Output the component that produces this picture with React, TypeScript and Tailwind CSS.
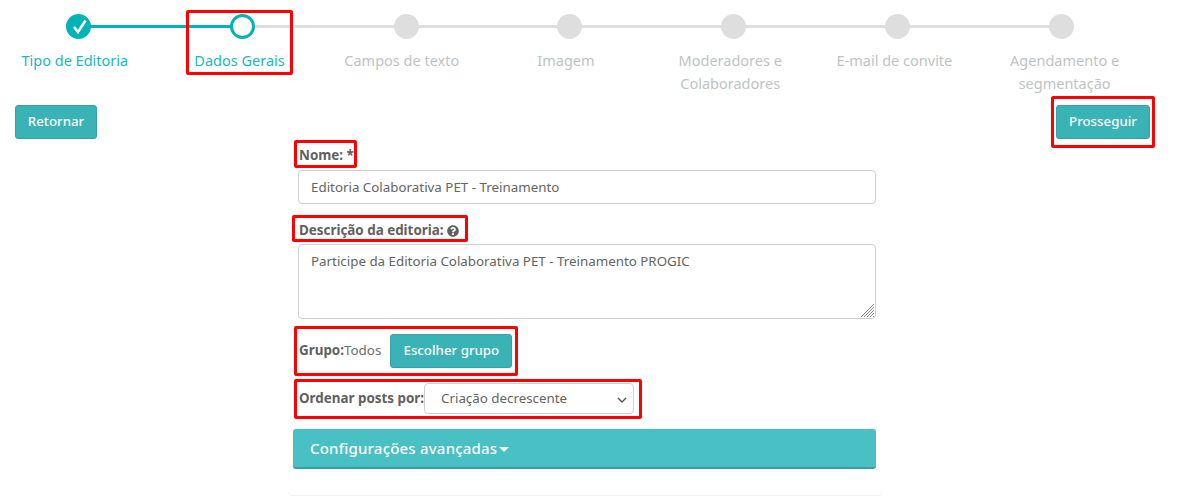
import { FaQuestionCircle } from 'react-icons/fa';

const STEPS = [
  { label: 'Tipo de Editoria', state: 'done', shift: 'mr-[8px]' },
  { label: 'Dados Gerais', state: 'current', shift: 'mr-[6px]' },
  { label: 'Campos de texto', state: 'todo', shift: 'mr-[9px]' },
  { label: 'Imagem', state: 'todo', shift: 'mr-[8px]' },
  { label: 'Moderadores e Colaboradores', state: 'todo', shift: 'mr-[7px]' },
  { label: 'E-mail de convite', state: 'todo', shift: 'mr-[6px]' },
  { label: 'Agendamento e segmentação', state: 'todo', shift: 'ml-[7px]' },
];

const Stepper = () => (
  <div className="-ml-[3px] grid w-[1146px] grid-cols-7 pt-[14px]">
    {STEPS.map((step, idx) => {
      const active = step.state !== 'todo';
      return (
        <div key={idx} className="relative flex flex-col items-center">
          {idx < STEPS.length - 1 && (
            <div className={`absolute left-1/2 top-[11px] h-[3px] w-full ${idx === 0 ? 'bg-[#00b3b8]' : 'bg-[#dedede]'}`} />
          )}
          {step.state === 'done' && (
            <div className="relative flex h-[25px] w-[25px] items-center justify-center rounded-full bg-[#00b3b8]">
              <svg className="ml-[1px]" width="15" height="15" viewBox="0 0 15 15" fill="none">
                <path d="M2 8 L6 13 L13.5 1.5" stroke="#fff" strokeWidth="2.6" />
              </svg>
            </div>
          )}
          {step.state === 'current' && (
            <div className="relative h-[25px] w-[25px] rounded-full border-[3px] border-[#00b3b8] bg-white" />
          )}
          {step.state === 'todo' && <div className="relative h-[25px] w-[25px] rounded-full bg-[#dedede]" />}
          <p className={`mt-[10px] w-[130px] text-center text-[14.5px] leading-[23px] ${step.shift} ${active ? 'text-[#1bb8bd]' : 'text-[#bdc4c4]'}`}>
            {step.label}
          </p>
        </div>
      );
    })}
  </div>
);

const TealButton = ({ children, className }: { children: string; className: string }) => (
  <button className={`h-[34px] rounded-[3px] border border-[#35a3a6] bg-[#3ab3b6] text-[13.3px] font-medium text-white ${className}`}>
    {children}
  </button>
);

// marcações vermelhas por cima da tela
const RED_BOXES = [
  'left-[186px] top-[10px] h-[65px] w-[107px]',
  'left-[294px] top-[140px] h-[28px] w-[63px]',
  'left-[292px] top-[215px] h-[27px] w-[176px]',
  'left-[294px] top-[326px] h-[50px] w-[224px]',
  'left-[294px] top-[379px] h-[40px] w-[348px]',
  'left-[1051px] top-[96px] h-[52px] w-[104px]',
];

const labelCls = 'text-[13.4px] font-bold text-[#5f6160]';
const fieldCls = 'rounded-[4px] border border-[#cfcfcf] bg-white px-[12px] text-[13.35px] text-[#636564]';

export default function App() {
  return (
    <div className="relative h-[497px] w-[1200px] overflow-hidden bg-white font-['Noto_Sans',sans-serif]">
      <Stepper />

      <div className="mt-[10px] flex justify-between pl-[15px] pr-[50px]">
        <TealButton className="w-[82px]">Retornar</TealButton>
        <TealButton className="w-[94px]">Prosseguir</TealButton>
      </div>

      <div className="ml-[288px] h-[357px] w-[594px] rounded-[4px] border-b border-[#f1f1f1] px-[10px]">
        <div className={`h-[31px] pl-[1px] pt-[6px] leading-[20px] ${labelCls}`}>Nome: *</div>
        <input
          readOnly
          value="Editoria Colaborativa PET - Treinamento"
          className={`block h-[34px] w-[578px] ${fieldCls}`}
        />
        <div className={`mt-[13px] flex h-[27px] items-center gap-[3px] pl-[1px] ${labelCls}`}>
          Descrição da editoria:
          <FaQuestionCircle className="text-[12px]" />
        </div>
        <div className="relative h-[75px] w-[578px]">
          <textarea
            readOnly
            value="Participe da Editoria Colaborativa PET - Treinamento PROGIC"
            className={`block h-[75px] w-[578px] resize-none py-[6px] ${fieldCls}`}
          />
          {/* alça de redimensionar */}
          <svg className="absolute bottom-[1px] right-[1px]" width="15" height="15" viewBox="0 0 15 15" fill="none">
            <path d="M1 14 L14 1 M4 14 L14 4 M7 14 L14 7 M10 14 L14 10 M13 14 L14 13" stroke="#8a8a8a" strokeWidth="1" />
          </svg>
        </div>
        <div className="mt-[15px] flex h-[34px] items-center pl-[1px]">
          <span className={`-mt-[1px] ${labelCls}`}>Grupo:</span>
          <span className="-mt-[1px] text-[13.4px] text-[#6b6d6c]">Todos</span>
          <TealButton className="ml-[9px] w-[122px]">Escolher grupo</TealButton>
        </div>
        <div className="mt-[15px] flex h-[31px] items-center pl-[1px]">
          <span className={`w-[125px] shrink-0 whitespace-nowrap ${labelCls}`}>Ordenar posts por:</span>
          <div className={`relative flex h-[31px] w-[210px] items-center ${fieldCls} pl-[16px]`}>
            Criação decrescente
            <svg className="absolute right-[5px] top-[11px]" width="12" height="10" viewBox="0 0 12 10" fill="none">
              <path d="M2 3 L6 7 L10 3" stroke="#555" strokeWidth="1.4" />
            </svg>
          </div>
        </div>
        <div className="-ml-[5px] mt-[15px] flex h-[40px] w-[583px] items-center gap-[2px] rounded-[3px] border-b-2 border-[#36a0a3] bg-[#48c0c4] pl-[17px] pt-[1px] text-[15px] font-medium tracking-[0.2px] text-white">
          Configurações avançadas
          <span className="mt-[1px] h-0 w-0 border-x-[5px] border-t-[5px] border-x-transparent border-t-white" />
        </div>
      </div>

      {RED_BOXES.map((box, idx) => (
        <div key={idx} className={`absolute rounded-[2px] border-[3px] border-[#ff0000] ${box}`} />
      ))}
    </div>
  );
}
